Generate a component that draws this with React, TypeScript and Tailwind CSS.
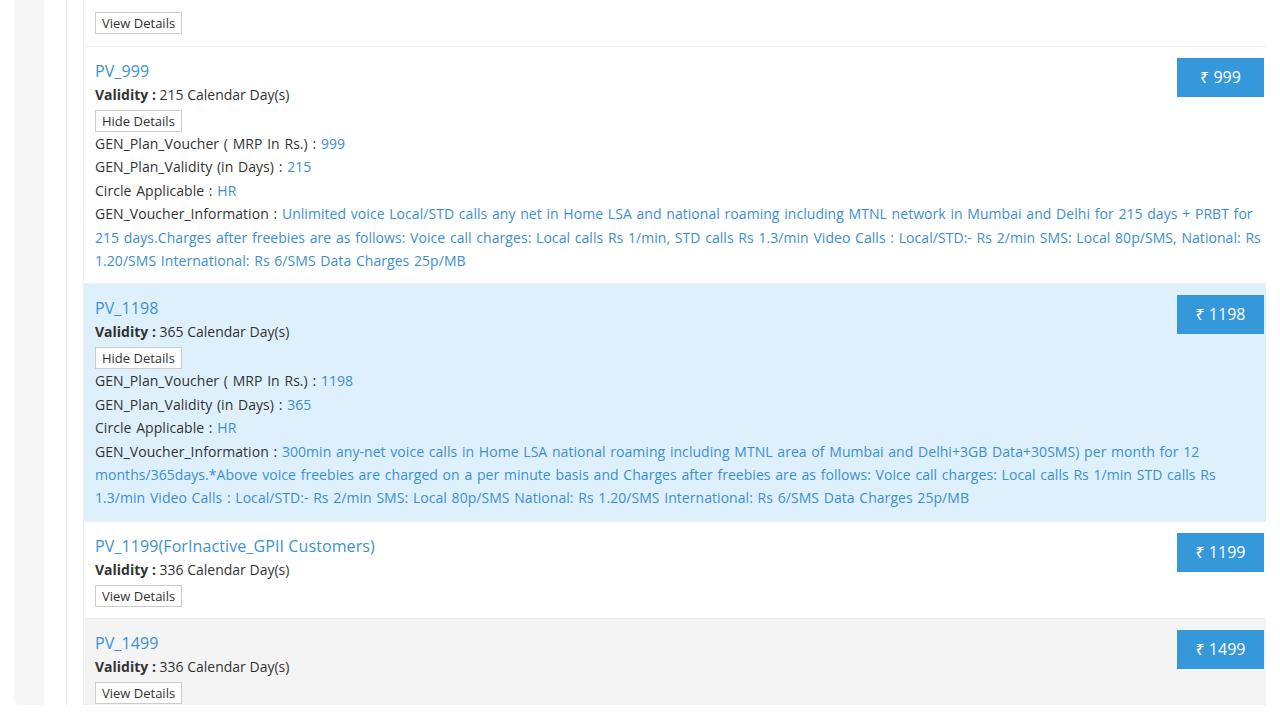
import React from 'react';

type Plan = {
  name: string;
  validity: number;
  price: number;
  bg: string;
  details?: { label: string; value: string }[];
};

const plans: Plan[] = [
  {
    name: 'PV_999',
    validity: 215,
    price: 999,
    bg: 'bg-white',
    details: [
      { label: 'GEN_Plan_Voucher ( MRP In Rs.)', value: '999' },
      { label: 'GEN_Plan_Validity (in Days)', value: '215' },
      { label: 'Circle Applicable', value: 'HR' },
      {
        label: 'GEN_Voucher_Information',
        value:
          'Unlimited voice Local/STD calls any net in Home LSA and national roaming including MTNL network in Mumbai and Delhi for 215 days + PRBT for 215 days.Charges after freebies are as follows: Voice call charges: Local calls Rs 1/min, STD calls Rs 1.3/min Video Calls : Local/STD:- Rs 2/min SMS: Local 80p/SMS, National: Rs 1.20/SMS International: Rs 6/SMS Data Charges 25p/MB',
      },
    ],
  },
  {
    name: 'PV_1198',
    validity: 365,
    price: 1198,
    bg: 'bg-[#dff0fd]',
    details: [
      { label: 'GEN_Plan_Voucher ( MRP In Rs.)', value: '1198' },
      { label: 'GEN_Plan_Validity (in Days)', value: '365' },
      { label: 'Circle Applicable', value: 'HR' },
      {
        label: 'GEN_Voucher_Information',
        value:
          '300min any-net voice calls in Home LSA national roaming including MTNL area of Mumbai and Delhi+3GB Data+30SMS) per month for 12 months/365days.*Above voice freebies are charged on a per minute basis and Charges after freebies are as follows: Voice call charges: Local calls Rs 1/min STD calls Rs 1.3/min Video Calls : Local/STD:- Rs 2/min SMS: Local 80p/SMS National: Rs 1.20/SMS International: Rs 6/SMS Data Charges 25p/MB',
      },
    ],
  },
  { name: 'PV_1199(ForInactive_GPII Customers)', validity: 336, price: 1199, bg: 'bg-white' },
  { name: 'PV_1499', validity: 336, price: 1499, bg: 'bg-[#f4f4f4]' },
];

const DetailsButton: React.FC<{ open: boolean }> = ({ open }) => (
  <button className="h-[22px] px-[6px] border border-[#cccccc] bg-white text-[13px] leading-[20px] text-[#333]">
    {open ? 'Hide Details' : 'View Details'}
  </button>
);

const PlanRow: React.FC<{ plan: Plan }> = ({ plan }) => (
  <div className={`${plan.bg} border-t border-[#eeeeee] pt-[11px] pb-[11px] pl-[11px] pr-[2px]`}>
    <button className="float-right w-[87px] h-[39px] bg-[#3498db] text-white text-[16px] leading-[39px] text-center">
      ₹ {plan.price}
    </button>
    <div className="text-[16px] leading-[24px] pt-[1px] tracking-[0.1px] text-[#3d92d0]">{plan.name}</div>
    <div className="text-[14px] leading-[23px] text-[#333]">
      <span className="font-bold">Validity :</span> {plan.validity} Calendar Day(s)
    </div>
    <div className="mt-[4px] flex">
      <DetailsButton open={!!plan.details} />
    </div>
    {plan.details && (
      <div className="text-[14px] leading-[23.4px] text-[#333] tracking-[0.05px] [word-spacing:1px]">
        {plan.details.map((d) => (
          <div key={d.label}>
            {d.label} : <span className="text-[#3b8fd0]">{d.value}</span>
          </div>
        ))}
      </div>
    )}
  </div>
);

export default function App() {
  return (
    <div className="w-[1280px] h-[720px] bg-white overflow-hidden font-['Open_Sans','Noto_Sans',sans-serif]">
      <div className="mx-[14px] h-[705px] flex overflow-hidden">
        {/* side rail */}
        <div className="w-[30px] bg-[#f7f7f7] rounded-bl-[6px]" />
        <div className="w-[23px] border-r border-[#e6e6e6]" />
        <div className="w-[16px]" />
        {/* plan list */}
        <div className="flex-1 border-l border-[#eeeeee] overflow-hidden">
          {/* tail of the previous plan, scrolled above */}
          <div className="bg-white pt-[12px] pb-[12px] pl-[11px] flex">
            <DetailsButton open={false} />
          </div>
          {plans.map((p) => (
            <PlanRow key={p.name} plan={p} />
          ))}
        </div>
      </div>
    </div>
  );
}
